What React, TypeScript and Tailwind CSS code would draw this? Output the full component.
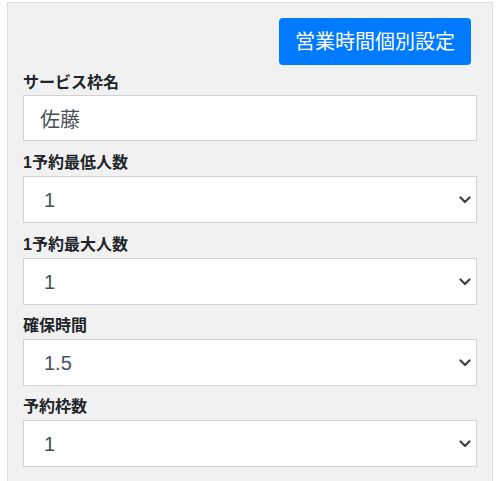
import React from 'react';

const FONT = '"Liberation Sans", "Noto Sans CJK JP", sans-serif';

// Chevron used for the select boxes
function Chevron() {
  return (
    <svg
      className="pointer-events-none absolute right-[6px] top-1/2 -translate-y-1/2"
      width="12"
      height="8"
      viewBox="0 0 12 8"
      fill="none"
    >
      <path d="M1.5 1.5L6 6L10.5 1.5" stroke="#3d4248" strokeWidth="2.2" strokeLinecap="round" strokeLinejoin="round" />
    </svg>
  );
}

interface SelectFieldProps {
  label: string;
  value: string;
  options: string[];
  wide?: boolean;
}

function SelectField({ label, value, options, wide }: SelectFieldProps) {
  return (
    <div className={wide ? 'mt-[12px]' : 'mt-[11px]'}>
      <label className="block text-[16px] leading-[20px] font-bold text-[#212529] mb-[3px]">{label}</label>
      <div className="relative">
        <select
          defaultValue={value}
          className="block w-full h-[47px] appearance-none bg-white border border-[#d2d2d2] pl-[20px] pr-[30px] text-[20px] text-[#495057] outline-none"
          style={{ fontFamily: FONT }}
        >
          {options.map((o) => (
            <option key={o} value={o}>
              {o}
            </option>
          ))}
        </select>
        <Chevron />
      </div>
    </div>
  );
}

export default function App() {
  const counts = ['1', '2', '3', '4', '5'];
  return (
    <div className="min-h-[481px] bg-white pl-[7px] pt-[2px]" style={{ fontFamily: FONT }}>
      <div className="w-[486px] min-h-[479px] bg-[#f1f1f1] border-l border-t border-r border-[#dcdcdc] px-[15px] pt-[15px]">
        {/* header button */}
        <div className="flex justify-end pr-[6px]">
          <button className="h-[47px] px-[16px] rounded-[4px] bg-[#007bff] text-white text-[20px] leading-none">
            営業時間個別設定
          </button>
        </div>

        {/* service name */}
        <div className="mt-[8px]">
          <label className="block text-[16px] leading-[20px] font-bold text-[#212529] mb-[2px]">サービス枠名</label>
          <input
            defaultValue="佐藤"
            className="block w-full h-[46px] bg-white border border-[#d2d2d2] px-[16px] text-[20px] text-[#495057] outline-none"
            style={{ fontFamily: FONT }}
          />
        </div>

        <SelectField label="1予約最低人数" value="1" options={counts} wide />
        <SelectField label="1予約最大人数" value="1" options={counts} wide />
        <SelectField label="確保時間" value="1.5" options={['0.5', '1', '1.5', '2']} />
        <SelectField label="予約枠数" value="1" options={counts} />
      </div>
    </div>
  );
}
